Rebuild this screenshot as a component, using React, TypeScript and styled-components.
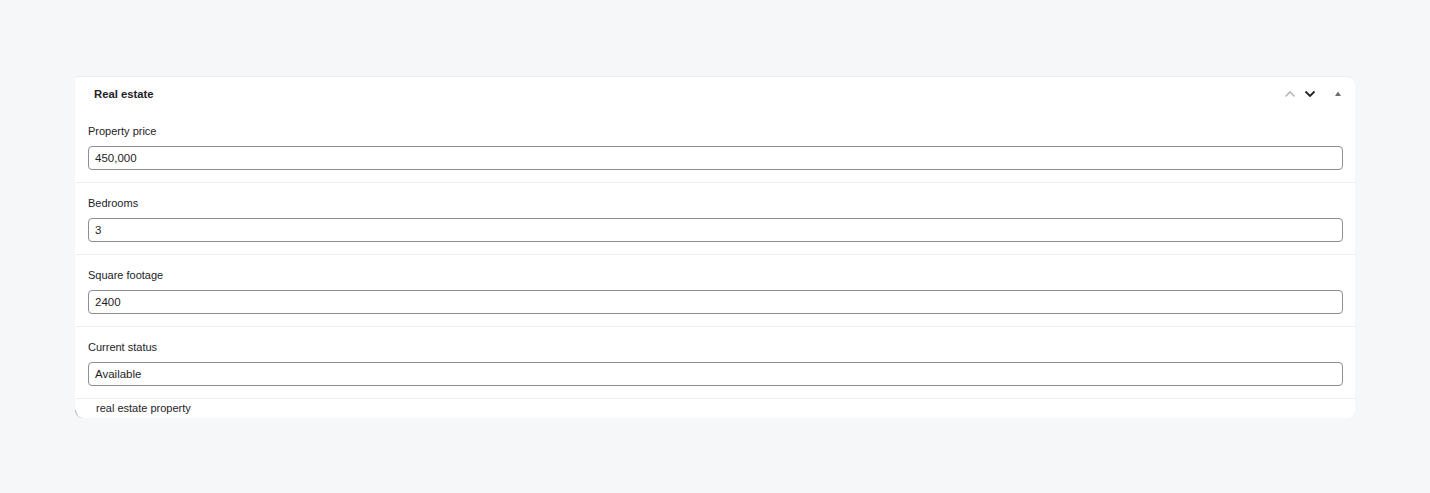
import React from "react";
import styled, { createGlobalStyle } from "styled-components";

const Global = createGlobalStyle`
  html, body { margin: 0; padding: 0; background: #f6f7f8; }
  body { font-family: "Liberation Sans", Arial, sans-serif; color: #1e1e1e; }
`;

const Page = styled.div`
  padding: 76px 75px 0 75px;
`;

const Card = styled.section`
  position: relative;
  background: #fff;
  border-top: 1px solid #ebecee;
  border-radius: 4px 8px 8px 8px;
  overflow: visible;
`;

const Header = styled.header`
  display: flex;
  align-items: center;
  justify-content: space-between;
  height: 34px;
  padding: 0 9px 0 19px;
`;

const Title = styled.h2`
  margin: 0;
  font-size: 11.3px;
  font-weight: 700;
  color: #1d2327;
`;

const Controls = styled.div`
  display: flex;
  align-items: center;
  gap: 4px;
`;

const IconBtn = styled.button<{ $muted?: boolean }>`
  display: flex;
  align-items: center;
  justify-content: center;
  width: 16px;
  height: 16px;
  padding: 0;
  border: 0;
  background: none;
  color: ${(p) => (p.$muted ? "#b4b6b9" : "#1d2327")};
  cursor: pointer;
`;

const Toggle = styled(IconBtn)`
  margin-left: 8px;
  color: #6b6e72;
`;

const Field = styled.div`
  display: flex;
  flex-direction: column;
  padding: 12px 12px 12px 13px;
  border-bottom: 1px solid #f0f0f1;
`;

const Label = styled.label`
  font-size: 11px;
  line-height: 16px;
  color: #1d2327;
  margin-bottom: 7px;
`;

const Input = styled.input`
  box-sizing: border-box;
  height: 24px;
  width: 100%;
  padding: 0 6px;
  border: 1px solid #8c8f94;
  border-radius: 4px;
  font-family: inherit;
  font-size: 11.5px;
  color: #1e1e1e;
  background: #fff;
  outline: none;
`;

const Footer = styled.footer`
  position: relative;
  height: 19px;
  padding-left: 21px;
  font-size: 11px;
  line-height: 19px;
  color: #1d2327;
  &::after {
    content: "";
    position: absolute;
    left: 0;
    bottom: 0;
    width: 8px;
    height: 8px;
    border-left: 1px solid #a7aaad;
    border-bottom-left-radius: 8px;
  }
`;

const fields = [
  { label: "Property price", value: "450,000" },
  { label: "Bedrooms", value: "3" },
  { label: "Square footage", value: "2400" },
  { label: "Current status", value: "Available" },
];

export default function App() {
  return (
    <>
      <Global />
      <Page>
        <Card>
          <Header>
            <Title>Real estate</Title>
            <Controls>
              <IconBtn $muted aria-label="Move up">
                <svg width="14" height="14" viewBox="0 0 14 14" fill="none" stroke="currentColor" strokeWidth="1.6">
                  <path d="M2.5 9.5 7 5l4.5 4.5" />
                </svg>
              </IconBtn>
              <IconBtn aria-label="Move down">
                <svg width="14" height="14" viewBox="0 0 14 14" fill="none" stroke="currentColor" strokeWidth="1.8">
                  <path d="M2.5 4.5 7 9l4.5-4.5" />
                </svg>
              </IconBtn>
              <Toggle aria-label="Toggle panel">
                <svg width="8" height="8" viewBox="0 0 8 8" fill="currentColor">
                  <path d="M4 1.5 7 6H1z" />
                </svg>
              </Toggle>
            </Controls>
          </Header>
          {fields.map((f) => (
            <Field key={f.label}>
              <Label>{f.label}</Label>
              <Input defaultValue={f.value} />
            </Field>
          ))}
          <Footer>real estate property</Footer>
        </Card>
      </Page>
    </>
  );
}
